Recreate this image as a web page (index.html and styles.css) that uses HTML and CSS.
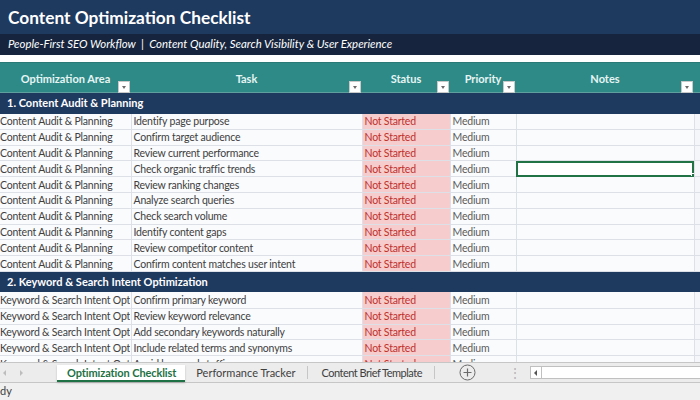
FILE: index.html
```html
<html>

<head>
  <meta name="viewport" content="width=device-width, initial-scale=1.0" />
  <title>Content Optimization Checklist</title>
  <link rel="stylesheet" href="styles.css">
</head>

<body>
  <div class="sheet">
    <div class="title-bar">Content Optimization Checklist</div>
    <div class="subtitle-bar">People-First SEO Workflow &nbsp;| &nbsp;Content Quality, Search Visibility &amp; User Experience</div>
    <div class="gap"></div>

    <table class="grid">
      <colgroup>
        <col class="col-a">
        <col class="col-b">
        <col class="col-c">
        <col class="col-d">
        <col class="col-e">
        <col class="col-f">
      </colgroup>
      <tr class="head">
        <th>Optimization Area<span class="filter"></span></th>
        <th>Task<span class="filter"></span></th>
        <th>Status<span class="filter"></span></th>
        <th>Priority<span class="filter"></span></th>
        <th>Notes<span class="filter"></span></th>
        <th class="blank"></th>
      </tr>
      <tr class="section">
        <td colspan="5">1. Content Audit &amp; Planning</td>
        <td class="blank"></td>
      </tr>
      <tr><td>Content Audit &amp; Planning</td><td>Identify page purpose</td><td class="status">Not Started</td><td class="prio">Medium</td><td></td><td class="blank"></td></tr>
      <tr><td>Content Audit &amp; Planning</td><td>Confirm target audience</td><td class="status">Not Started</td><td class="prio">Medium</td><td></td><td class="blank"></td></tr>
      <tr><td>Content Audit &amp; Planning</td><td>Review current performance</td><td class="status">Not Started</td><td class="prio">Medium</td><td></td><td class="blank"></td></tr>
      <tr><td>Content Audit &amp; Planning</td><td>Check organic traffic trends</td><td class="status">Not Started</td><td class="prio">Medium</td><td class="selected"><span class="handle"></span></td><td class="blank"></td></tr>
      <tr><td>Content Audit &amp; Planning</td><td>Review ranking changes</td><td class="status">Not Started</td><td class="prio">Medium</td><td></td><td class="blank"></td></tr>
      <tr><td>Content Audit &amp; Planning</td><td>Analyze search queries</td><td class="status">Not Started</td><td class="prio">Medium</td><td></td><td class="blank"></td></tr>
      <tr><td>Content Audit &amp; Planning</td><td>Check search volume</td><td class="status">Not Started</td><td class="prio">Medium</td><td></td><td class="blank"></td></tr>
      <tr><td>Content Audit &amp; Planning</td><td>Identify content gaps</td><td class="status">Not Started</td><td class="prio">Medium</td><td></td><td class="blank"></td></tr>
      <tr><td>Content Audit &amp; Planning</td><td>Review competitor content</td><td class="status">Not Started</td><td class="prio">Medium</td><td></td><td class="blank"></td></tr>
      <tr><td>Content Audit &amp; Planning</td><td>Confirm content matches user intent</td><td class="status">Not Started</td><td class="prio">Medium</td><td></td><td class="blank"></td></tr>
      <tr class="section">
        <td colspan="5">2. Keyword &amp; Search Intent Optimization</td>
        <td class="blank"></td>
      </tr>
      <tr><td><span class="clip">Keyword &amp; Search Intent Optimization</span></td><td>Confirm primary keyword</td><td class="status">Not Started</td><td class="prio">Medium</td><td></td><td class="blank"></td></tr>
      <tr><td><span class="clip">Keyword &amp; Search Intent Optimization</span></td><td>Review keyword relevance</td><td class="status">Not Started</td><td class="prio">Medium</td><td></td><td class="blank"></td></tr>
      <tr><td><span class="clip">Keyword &amp; Search Intent Optimization</span></td><td>Add secondary keywords naturally</td><td class="status">Not Started</td><td class="prio">Medium</td><td></td><td class="blank"></td></tr>
      <tr><td><span class="clip">Keyword &amp; Search Intent Optimization</span></td><td>Include related terms and synonyms</td><td class="status">Not Started</td><td class="prio">Medium</td><td></td><td class="blank"></td></tr>
      <tr><td><span class="clip">Keyword &amp; Search Intent Optimization</span></td><td>Avoid keyword stuffing</td><td class="status">Not Started</td><td class="prio">Medium</td><td></td><td class="blank"></td></tr>
    </table>
  </div>

  <div class="tabbar">
    <div class="nav">
      <span class="arrow left"></span>
      <span class="arrow right"></span>
    </div>
    <div class="tab active">Optimization Checklist</div>
    <div class="tab">Performance Tracker</div>
    <div class="tab brief">Content Brief Template</div>
    <div class="add">
      <svg width="17" height="17" viewBox="0 0 17 17">
        <circle cx="8.5" cy="8.5" r="7.5" fill="none" stroke="#6a6a6a" stroke-width="1"/>
        <path d="M8.5 4.5v8M4.5 8.5h8" stroke="#6a6a6a" stroke-width="1.2"/>
      </svg>
    </div>
    <div class="dots">&#8942;</div>
    <div class="hscroll">
      <span class="hs-btn"><span class="hs-tri"></span></span>
      <span class="hs-track"></span>
    </div>
  </div>

  <div class="statusbar">dy</div>
</body>

</html>
```

FILE: styles.css
```css
body {
  margin: 0px;
  width: 700px;
  height: 400px;
  overflow: hidden;
  font-family: "Lato", "Liberation Sans", sans-serif;
  background: #f0f0f0;
}

* {
  box-sizing: border-box;
}

.sheet {
  height: 362px;
  overflow: hidden;
  background: #ffffff;
}

.title-bar {
  height: 34px;
  background: #1f3a5f;
  color: #ffffff;
  font-weight: 700;
  font-size: 17.3px;
  padding: 7px 0 0 8px;
}

.subtitle-bar {
  height: 21px;
  background: #16253d;
  color: #ffffff;
  font-style: italic;
  font-size: 11.4px;
  padding: 3px 0 0 8px;
  white-space: nowrap;
}

.gap {
  height: 7px;
  background: #ffffff;
}

.grid {
  border-collapse: collapse;
  table-layout: fixed;
  width: 700px;
  font-size: 10.5px;
  letter-spacing: -0.2px;
}

.col-a { width: 131px; }
.col-b { width: 231px; }
.col-c { width: 88px; }
.col-d { width: 66px; }
.col-e { width: 178px; }
.col-f { width: 6px; }

.grid td {
  height: 15.8px;
  padding: 0 0 0 2px;
  white-space: nowrap;
  overflow: hidden;
  color: #404040;
  background: #fafbfd;
  border-bottom: 1px solid #dde1e7;
  border-right: 1px solid #dde1e7;
  line-height: 14px;
}

.grid td:first-child {
  padding-left: 0;
}

.clip {
  display: block;
  width: 130px;
  overflow: hidden;
}

.head th {
  position: relative;
  height: 30px;
  background: #2e8a87;
  color: #e6f5f4;
  font-weight: 700;
  font-size: 11px;
  letter-spacing: 0;
  text-align: center;
  padding: 2px 0 0 0;
  border-top: 1px solid #2a7a78;
  border-bottom: 1px solid #5f9f9d;
}

.head th.blank {
  background: #2e8a87;
}

.filter {
  position: absolute;
  right: 1px;
  bottom: -1px;
  width: 12px;
  height: 12px;
  background: #ffffff;
  border: 1px solid #c9c9c9;
}

.filter::after {
  content: "";
  position: absolute;
  left: 3px;
  top: 4px;
  border-left: 2.5px solid transparent;
  border-right: 2.5px solid transparent;
  border-top: 3px solid #6b6b6b;
}

.grid tr.section td {
  height: 21px;
  background: #1f3a5f;
  color: #ffffff;
  font-weight: 700;
  font-size: 11px;
  letter-spacing: 0;
  padding-left: 7px;
  border: none;
}

.grid td.status {
  background: #f6cccc;
  color: #c0302b;
}

.grid td.prio {
  color: #5a5a5a;
}

.grid td.selected {
  position: relative;
  background: #ffffff;
  outline: 2px solid #217346;
  outline-offset: -2px;
}

.handle {
  position: absolute;
  right: -2px;
  bottom: -2px;
  width: 5px;
  height: 5px;
  background: #217346;
  border: 1px solid #ffffff;
}

.grid td.blank {
  background: #f4f6f9;
  border-right: none;
  padding: 0;
}

.tabbar {
  height: 21px;
  display: flex;
  align-items: stretch;
  background: #ececec;
  border-top: 1px solid #c6c6c6;
  border-bottom: 1px solid #c6c6c6;
  font-size: 11px;
  color: #404040;
}

.nav {
  width: 57px;
  display: flex;
  align-items: center;
  gap: 14px;
  padding-left: 3px;
}

.arrow {
  width: 0;
  height: 0;
  border-top: 3px solid transparent;
  border-bottom: 3px solid transparent;
}

.arrow.left {
  border-right: 3px solid #bdbdbd;
}

.arrow.right {
  border-left: 3px solid #bdbdbd;
}

.tab {
  display: flex;
  align-items: center;
  padding: 0 12px 0 11px;
  border-right: 1px solid #c6c6c6;
  margin: 3px 0;
}

.tab.brief {
  padding: 0 12px 0 13px;
  letter-spacing: -0.5px;
}

.tab.active {
  margin: 2px 0 0 0;
  background: #ffffff;
  color: #1e7145;
  font-weight: 700;
  font-size: 11px;
  letter-spacing: -0.1px;
  border-bottom: 2px solid #1e7145;
  border-right: none;
  box-shadow: 0 1px 2px rgba(0, 0, 0, 0.2);
  padding: 0 9px 0 10px;
}

.add {
  width: 66px;
  display: flex;
  align-items: center;
  justify-content: center;
}

.dots {
  width: 28px;
  display: flex;
  align-items: center;
  justify-content: center;
  color: #b0b0b0;
  font-size: 12px;
}

.hscroll {
  flex: 1;
  display: flex;
  align-items: center;
  padding-left: 1px;
}

.hs-btn {
  width: 12px;
  height: 13px;
  background: #ffffff;
  border: 1px solid #c0c0c0;
  display: flex;
  align-items: center;
  justify-content: center;
}

.hs-tri {
  border-top: 3px solid transparent;
  border-bottom: 3px solid transparent;
  border-right: 3px solid #555555;
}

.hs-track {
  flex: 1;
  height: 13px;
  background: #ffffff;
  border-top: 1px solid #c0c0c0;
  border-bottom: 1px solid #c0c0c0;
}

.statusbar {
  height: 16px;
  font-size: 11px;
  color: #404040;
  padding: 1px 0 0 0;
  background: #f0f0f0;
}
```
